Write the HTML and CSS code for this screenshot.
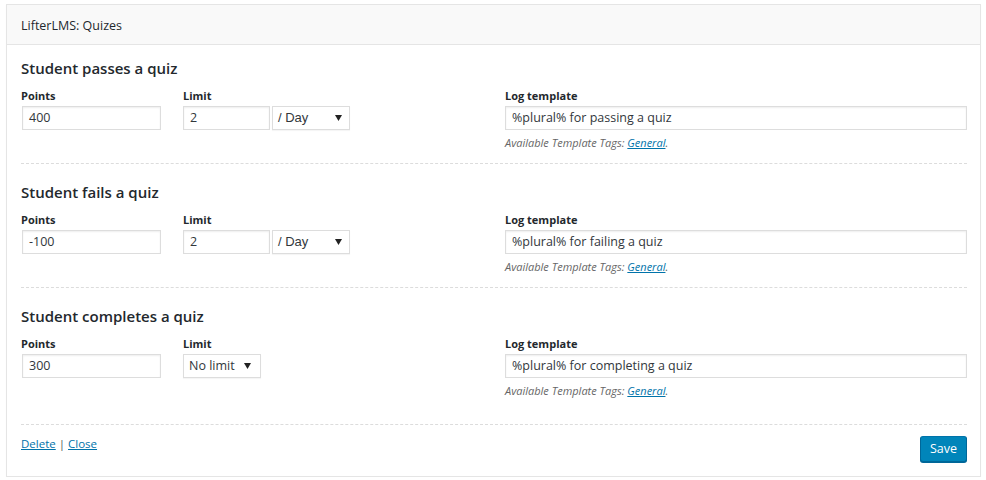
FILE: index.html
```html
<!DOCTYPE html>
<html>
<head>
<meta charset="utf-8">
<link rel="stylesheet" href="styles.css">
</head>
<body>
<div class="box">
  <div class="box-head">LifterLMS: Quizes</div>
  <div class="box-body">
    <div class="section first">
      <h3 class="sec-title">Student passes a quiz</h3>
      <div class="row">
        <div class="col col-points">
          <div class="label">Points</div>
          <div class="input w-points">400</div>
        </div>
        <div class="col col-limit">
          <div class="label">Limit</div>
          <div class="limit-controls">
            <div class="input w-limit">2</div>
            <div class="select w-sel"><span class="sel-text">/ Day</span><svg class="arrow" width="7" height="6" viewBox="0 0 7 6"><path d="M0 0H7L3.5 6Z" fill="#222"/></svg></div>
          </div>
        </div>
        <div class="col col-log">
          <div class="label">Log template</div>
          <div class="input w-log">%plural% for passing a quiz</div>
          <div class="help">Available Template Tags: <a href="#">General</a>.</div>
        </div>
      </div>
    </div>
    <div class="section">
      <h3 class="sec-title">Student fails a quiz</h3>
      <div class="row">
        <div class="col col-points">
          <div class="label">Points</div>
          <div class="input w-points">-100</div>
        </div>
        <div class="col col-limit">
          <div class="label">Limit</div>
          <div class="limit-controls">
            <div class="input w-limit">2</div>
            <div class="select w-sel"><span class="sel-text">/ Day</span><svg class="arrow" width="7" height="6" viewBox="0 0 7 6"><path d="M0 0H7L3.5 6Z" fill="#222"/></svg></div>
          </div>
        </div>
        <div class="col col-log">
          <div class="label">Log template</div>
          <div class="input w-log">%plural% for failing a quiz</div>
          <div class="help">Available Template Tags: <a href="#">General</a>.</div>
        </div>
      </div>
    </div>
    <div class="section last">
      <h3 class="sec-title">Student completes a quiz</h3>
      <div class="row">
        <div class="col col-points">
          <div class="label">Points</div>
          <div class="input w-points">300</div>
        </div>
        <div class="col col-limit">
          <div class="label">Limit</div>
          <div class="limit-controls">
            <div class="select w-sel nolimit"><span class="sel-text alt">No limit</span><svg class="arrow" width="7" height="6" viewBox="0 0 7 6"><path d="M0 0H7L3.5 6Z" fill="#222"/></svg></div>
          </div>
        </div>
        <div class="col col-log">
          <div class="label">Log template</div>
          <div class="input w-log">%plural% for completing a quiz</div>
          <div class="help">Available Template Tags: <a href="#">General</a>.</div>
        </div>
      </div>
    </div>
    <div class="footer">
      <div class="links"><a href="#">Delete</a> | <a href="#">Close</a></div>
      <button class="btn-save">Save</button>
    </div>
  </div>
</div>
</body>
</html>
```
FILE: styles.css
```css
* { box-sizing: border-box; }
html, body { margin: 0; padding: 0; background: #fff; }
body {
  font-family: "Open Sans", "Noto Sans", sans-serif;
  color: #23282d;
  font-size: 13px;
}
.box {
  margin: 4px 0 0 6px;
  width: 975px;
  height: 473px;
  border: 1px solid #e5e5e5;
  box-shadow: 0 1px 1px rgba(0,0,0,0.04);
}
.box-head {
  height: 40px;
  background: #f9f9f9;
  border-bottom: 1px solid #e5e5e5;
  padding: 0 14px;
  font-size: 12.5px;
  font-weight: 400;
  line-height: 41px;
  color: #23282d;
}
.box-body { padding: 0 13px 0 14px; }
.section {
  padding: 17px 0 12px;
  border-bottom: 1px dashed #dcdcdc;
}
.section.first { padding-top: 12px; }
.section.last { padding-bottom: 25px; }
.sec-title {
  margin: 0 0 9px;
  font-size: 15px;
  font-weight: 600;
  line-height: 22px;
  color: #23282d;
}
.row { display: grid; grid-template-columns: 162px 322px 1fr; }
.label {
  font-size: 11px;
  font-weight: 700;
  line-height: 16px;
  margin-bottom: 2px;
}
.input, .select {
  height: 24px;
  border: 1px solid #ddd;
  box-shadow: inset 0 1px 2px rgba(0,0,0,0.07);
  background: #fff;
  color: #32373c;
  font-size: 12.5px;
  line-height: 22px;
  padding: 0 6px;
  white-space: nowrap;
}
.w-points { width: 139px; margin-left: 1px; }
.w-limit { width: 87px; }
.w-sel { width: 78px; }
.w-log { width: 462px; }
.limit-controls { display: flex; gap: 2px; }
.select {
  display: flex;
  align-items: center;
  justify-content: space-between;
  padding: 0 7px 0 5px;
  box-shadow: 0 1px 1px rgba(0,0,0,0.04);
}
.sel-text { font-family: "Liberation Sans", Arial, sans-serif; font-size: 13px; color: #32373c; }
.sel-text.alt { font-family: "Open Sans", "Noto Sans", sans-serif; font-size: 12.5px; }
.nolimit { padding-right: 9px; }
.arrow { display: block; }
.help {
  margin-top: 5px;
  font-size: 11px;
  font-style: italic;
  color: #666;
  line-height: 16px;
}
.help a { color: #0073aa; text-decoration: underline; }
.footer {
  display: flex;
  justify-content: space-between;
  align-items: flex-start;
  padding-top: 11px;
}
.links { font-size: 11.5px; line-height: 16px; color: #555; }
.links a { color: #0073aa; text-decoration: underline; }
.btn-save {
  width: 47px;
  height: 26px;
  background: #0085ba;
  border: 1px solid;
  border-color: #0073aa #006799 #006799;
  border-radius: 3px;
  box-shadow: 0 1px 0 #006799;
  color: #fff;
  font-family: "Open Sans", "Noto Sans", sans-serif;
  font-size: 12.5px;
  line-height: 24px;
  padding: 0;
  cursor: pointer;
}
```
